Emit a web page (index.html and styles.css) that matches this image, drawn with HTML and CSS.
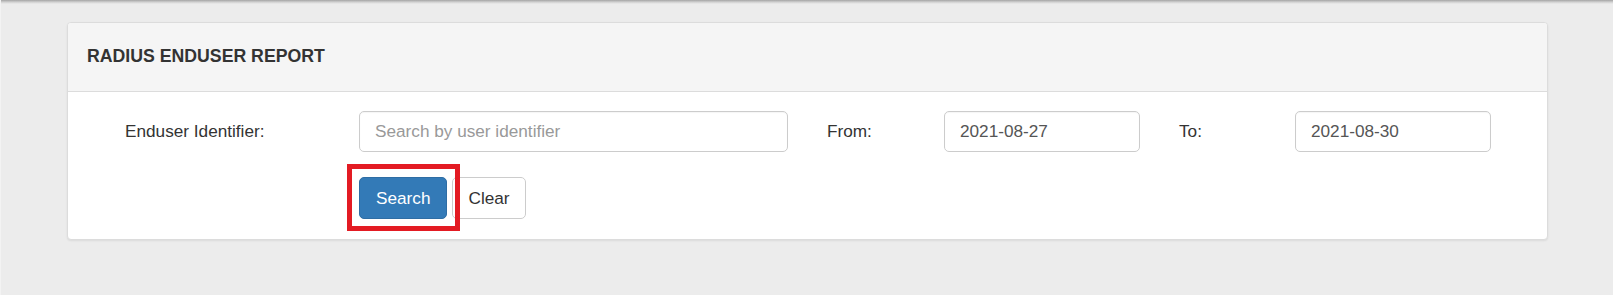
FILE: index.html
```html
<!DOCTYPE html>
<html>
<head>
<meta charset="utf-8">
<title>Radius Enduser Report</title>
<link rel="stylesheet" href="styles.css">
</head>
<body>
<div class="page">
  <div class="panel">
    <div class="panel-heading">
      <h3 class="panel-title">RADIUS ENDUSER REPORT</h3>
    </div>
    <div class="panel-body">
      <form class="report-form">
        <label class="form-label first">Enduser Identifier:</label>
        <input class="form-control" type="text" placeholder="Search by user identifier">
        <label class="form-label">From:</label>
        <input class="form-control" type="text" value="2021-08-27">
        <label class="form-label">To:</label>
        <input class="form-control" type="text" value="2021-08-30">
        <div class="actions">
          <span class="highlight"><button type="button" class="btn btn-primary">Search</button></span>
          <button type="button" class="btn btn-default">Clear</button>
        </div>
      </form>
    </div>
  </div>
</div>
</body>
</html>
```

FILE: styles.css
```css
html, body {
  margin: 0;
  padding: 0;
}
body {
  background: linear-gradient(#a4a4a4 0, #cfcfcf 2px, #ececec 4px) #ececec;
  font-family: "Liberation Sans", Arial, sans-serif;
  color: #333;
  height: 295px;
  border-left: 1px solid #f3f3f3;
  box-sizing: border-box;
}
.page {
  padding: 22px 65px 0 66px;
}
.panel {
  background: #fff;
  border: 1px solid #dcdcdc;
  border-radius: 4px;
  box-shadow: 0 1px 2px rgba(0, 0, 0, 0.08);
  overflow: hidden;
}
.panel-heading {
  background: #f5f5f5;
  border-bottom: 1px solid #dcdcdc;
  height: 68px;
  display: flex;
  align-items: center;
  padding: 0 19px;
}
.panel-title {
  margin: 0;
  font-size: 17.7px;
  font-weight: bold;
  color: #333;
  line-height: 1;
}
.panel-body {
  padding: 19px 18px 20px 18px;
}
.report-form {
  display: grid;
  grid-template-columns: 273px 429px 156px 196px 155px 196px;
  grid-template-rows: 41px 42px;
  row-gap: 25px;
  align-items: center;
}
.form-label {
  font-size: 17.2px;
  padding-left: 39px;
  color: #333;
}
.form-label.first {
  padding-left: 39px;
}
.form-control {
  box-sizing: border-box;
  height: 41px;
  width: 100%;
  border: 1px solid #ccc;
  border-radius: 5px;
  padding: 0 15px;
  font-family: inherit;
  font-size: 17.2px;
  color: #555;
  background: #fff;
  box-shadow: inset 0 1px 1px rgba(0, 0, 0, 0.04);
}
.form-control::placeholder {
  color: #999;
}
.actions {
  grid-column: 2 / 4;
  display: flex;
  gap: 5px;
  align-items: center;
}
.highlight {
  position: relative;
  display: inline-flex;
}
.highlight::after {
  content: "";
  position: absolute;
  left: -12px;
  right: -13px;
  top: -13px;
  bottom: -12px;
  border: 5px solid #e31b23;
  pointer-events: none;
}
.btn {
  box-sizing: border-box;
  height: 42px;
  padding: 0 16px;
  font-family: inherit;
  font-size: 17.2px;
  border-radius: 5px;
  border: 1px solid transparent;
  cursor: pointer;
}
.btn-primary {
  background: #337ab7;
  border-color: #2e6da4;
  color: #fff;
}
.btn-default {
  background: #fff;
  border-color: #ccc;
  color: #333;
  padding: 0 15px;
}
```
